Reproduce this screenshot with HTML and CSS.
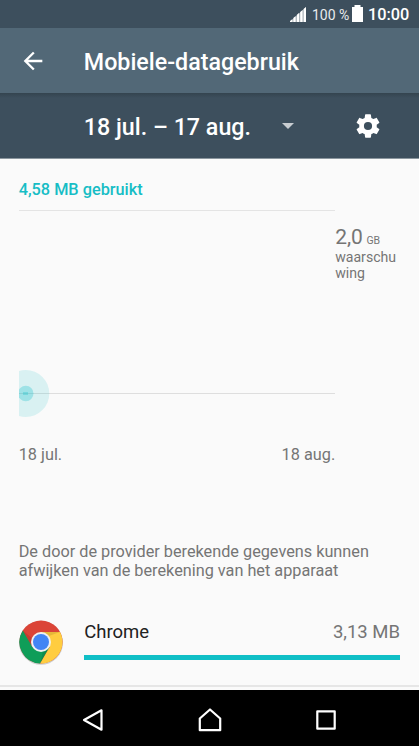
FILE: index.html
```html
<!DOCTYPE html>
<html lang="nl">
<head>
<meta charset="utf-8">
<title>Mobiele-datagebruik</title>
<link rel="stylesheet" href="styles.css">
</head>
<body>
<div class="screen">
  <div class="status">
    <svg class="signal" width="17" height="16" viewBox="0 0 17 16"><path fill="#fff" fill-opacity=".45" d="M0 16L16 1v15z"/><path fill="#fff" d="M0 16v-1l2.500-2v3zM3.300 16v-4l2.400-2v6zM6.700 16V9l2.500-2.300V16zM10.200 16V6l2.400-2v12zM13.600 16V3L16 1v15z"/></svg>
    <span class="percent">100 %</span>
    <svg class="battery" width="11" height="17" viewBox="0 0 11 17"><path fill="#fff" d="M2.500 0h6v2H11v15H0V2h2.500z"/></svg>
    <span class="clock">10:00</span>
  </div>
  <header class="appbar">
    <svg class="back" width="28" height="28" viewBox="0 0 24 24"><path fill="#fff" d="M20 11H7.830l5.590-5.590L12 4l-8 8 8 8 1.410-1.410L7.830 13H20v-2z"/></svg>
    <h1>Mobiele-datagebruik</h1>
  </header>
  <div class="cycle">
    <span class="range">18 jul. – 17 aug.</span>
    <svg class="caret" width="12" height="6" viewBox="0 0 12 6"><path fill="#c8cdd1" d="M0 0h12L6 6z"/></svg>
    <svg class="gear" width="28" height="28" viewBox="0 0 24 24"><path fill="#fff" d="M19.430 12.980c.04-.32.07-.64.07-.98s-.03-.66-.07-.98l2.110-1.650c.19-.15.24-.42.12-.64l-2-3.460c-.12-.22-.39-.3-.61-.22l-2.490 1c-.52-.4-1.080-.73-1.690-.98l-.38-2.650A.49.49 0 0 0 14 2h-4c-.25 0-.46.18-.49.42l-.38 2.650c-.61.25-1.170.59-1.690.98l-2.490-1c-.23-.09-.49 0-.61.22l-2 3.460c-.13.22-.07.49.12.64l2.110 1.650c-.04.32-.07.65-.07.98s.03.66.07.98l-2.110 1.650c-.19.15-.24.42-.12.64l2 3.460c.12.22.39.3.61.22l2.490-1c.52.4 1.080.73 1.690.98l.38 2.650c.03.24.24.42.49.42h4c.25 0 .46-.18.49-.42l.38-2.650c.61-.25 1.170-.59 1.690-.98l2.490 1c.23.09.49 0 .61-.22l2-3.460c.12-.22.07-.49-.12-.64l-2.110-1.650zM12 15.500a3.500 3.500 0 1 1 0-7 3.500 3.500 0 0 1 0 7z"/></svg>
  </div>
  <main>
    <div class="used">4,58 MB gebruikt</div>
    <div class="chart">
      <svg class="plot" width="316.500" height="210" viewBox="0 0 316.500 210"><path stroke="#e4e4e4" d="M0 .5h317"/><path stroke="#dedede" d="M0 183.500h317"/><circle cx="6.800" cy="183.500" r="23.500" fill="#16c1c9" fill-opacity=".14"/><circle cx="6.800" cy="183.500" r="7.700" fill="#16c1c9" fill-opacity=".3"/><path stroke="#16c1c9" stroke-opacity=".3" stroke-width="3" d="M4 183.500h5"/></svg>
      <div class="limit"><div class="amount"><span>2,0</span><small>GB</small></div><div>waarschu</div><div>wing</div></div>
    </div>
    <div class="dates"><span>18 jul.</span><span>18 aug.</span></div>
    <p class="note">De door de provider berekende gegevens kunnen<br>afwijken van de berekening van het apparaat</p>
    <div class="app">
      <svg class="chrome" width="46" height="48" viewBox="-23 -23 46 48"><circle cy=".8" r="22" fill="#000" opacity=".18"/><circle r="21.500" fill="#db4437"/><path fill="#0f9d58" d="M-18.200-11.500A21.500 21.500 0 0 0-.86 21.500L8.660 5 0 0-8.660 5z"/><path fill="#ffcd40" d="M19-10A21.500 21.500 0 0 1-.86 21.500L8.660 5 0-10z"/><path fill="#000" opacity=".1" d="M-18.200-11.500L-8-3-8.660 5zM19-10L8-6 0-10zM-.86 21.500L2 9 8.660 5z"/><circle r="10" fill="#f1f1f1"/><circle r="8" fill="#4285f4"/></svg>
      <div class="detail">
        <div class="line"><span class="name">Chrome</span><span class="size">3,13 MB</span></div>
        <div class="bar"></div>
      </div>
    </div>
  </main>
  <nav>
    <svg width="22" height="24" viewBox="0 0 22 24"><path d="M2 12L19.500 2.300v19.400z"/></svg>
    <svg width="24" height="24" viewBox="0 0 24 24"><path d="M1.800 10.500L12 1.500l10.200 9v11.700H1.800z"/></svg>
    <svg width="20" height="20" viewBox="0 0 20 20"><path d="M1.300 1.300h17.400v17.400H1.300z"/></svg>
  </nav>
</div>
</body>
</html>
```
FILE: styles.css
```css
* { box-sizing: border-box; }
body { margin: 0; font-family: Roboto, sans-serif; background: #fafafa; }
svg { display: block; flex: none; }
.screen { width: 419px; height: 746px; display: flex; flex-direction: column; overflow: hidden; }
.status { height: 28px; background: #3d4f5d; color: #fff; display: flex; padding-left: 290px; white-space: nowrap; flex: none; }
.signal { margin-top: 6px; }
.percent { font-size: 14px; line-height: 30px; margin-left: 5px; width: 37px; color: #e8ebed; }
.battery { margin: 5px 0 0 3px; }
.clock { font-size: 16.3px; font-weight: 500; line-height: 30px; margin-left: 5px; }
.appbar { height: 65px; flex: none; background: #526877; display: flex; align-items: center; padding-left: 18.5px; color: #fff; }
.appbar h1 { margin: 2px 0 0 37.3px; font-size: 23.25px; line-height: 28px; font-weight: 500; white-space: nowrap; }
.cycle { height: 66px; flex: none; background: linear-gradient(#34444f, #3d4f5d 5px); border-bottom: 1px solid #8b969e; display: flex; align-items: center; padding-left: 83.8px; color: #fff; }
.range { width: 198.2px; font-size: 23.25px; font-weight: 500; line-height: 28px; white-space: nowrap; margin-top: 2px; }
.gear { margin-left: 60px; }
main { height: 531px; flex: none; padding: 20px 19px 0 18.7px; background: #fafafa; color: #757575; display: flex; flex-direction: column; }
main::after { content: ""; height: 2px; margin: 18px -19px 0; background: #e6e6e6; }
.used { height: 31px; padding-top: 1px; font-size: 16.3px; line-height: 20px; font-weight: 500; color: #16bdc5; }
.chart { display: flex; height: 210px; }
.limit { font-size: 14.1px; line-height: 16px; padding-top: 16px; }
.amount { display: flex; align-items: baseline; gap: 3.500px; font-size: 21px; line-height: 22px; height: 23px; white-space: nowrap; }
.amount small { font-size: 10.500px; line-height: 10px; }
.dates { display: flex; justify-content: space-between; width: 316.5px; margin-top: 25px; font-size: 16.3px; line-height: 20px; }
.note { margin: 77px 0 0; font-size: 16.25px; line-height: 19px; white-space: nowrap; }
.app { display: flex; height: 48px; margin-top: 39px; }
.chrome { margin-left: -0.5px; }
.detail { margin-left: 20px; width: 316.5px; }
.line { display: flex; justify-content: space-between; font-size: 18.5px; line-height: 26px; }
.name { color: #212121; }
.bar { height: 5px; margin-top: 10px; background: #10bfc6; }
nav { height: 56px; flex: none; background: #000; display: flex; align-items: center; padding: 4px 83px 0 81.5px; justify-content: space-between; }
nav path { fill: none; stroke: #fff; stroke-width: 2.200; stroke-linejoin: round; }
```
